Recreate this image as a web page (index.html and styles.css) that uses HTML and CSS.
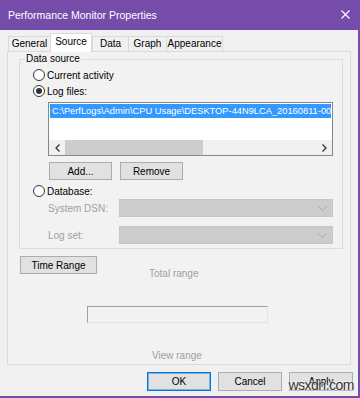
FILE: index.html
```html
<!DOCTYPE html>
<html lang="en">
<head>
    <meta charset="UTF-8">
    <meta name="viewport" content="width=device-width, initial-scale=1.0">
    <title>Performance Monitor Properties</title>
    <link rel="stylesheet" href="styles.css">
</head>
<body>
    <div class="window">
        <div class="titlebar">
            <span>Performance Monitor Properties</span>
            <svg class="close" width="9" height="9" viewBox="0 0 9 9">
                <path d="M0.5 0.5 L8.5 8.5 M8.5 0.5 L0.5 8.5" stroke="#fff" stroke-width="1.1" fill="none"/>
            </svg>
        </div>

        <div class="tabs">
            <div class="tab tab-general">General</div>
            <div class="tab tab-source active">Source</div>
            <div class="tab tab-data">Data</div>
            <div class="tab tab-graph">Graph</div>
            <div class="tab tab-appearance">Appearance</div>
        </div>

        <div class="page">
            <div class="group">
                <span class="legend">Data source</span>

                <div class="radio-row first">
                    <span class="radio"></span>
                    <span>Current activity</span>
                </div>
                <div class="radio-row">
                    <span class="radio checked"></span>
                    <span>Log files:</span>
                </div>

                <div class="listbox">
                    <div class="list-item">C:\PerfLogs\Admin\CPU Usage\DESKTOP-44N9LCA_20160811-000001\DataCollector01.blg</div>
                    <div class="list-fill"></div>
                    <div class="hscroll">
                        <span class="arrow">
                            <svg width="5" height="8" viewBox="0 0 5 8"><path d="M4.5 0.5 L1 4 L4.5 7.5" stroke="#333" stroke-width="1.3" fill="none"/></svg>
                        </span>
                        <span class="thumb"></span>
                        <span class="track"></span>
                        <span class="arrow">
                            <svg width="5" height="8" viewBox="0 0 5 8"><path d="M0.5 0.5 L4 4 L0.5 7.5" stroke="#333" stroke-width="1.3" fill="none"/></svg>
                        </span>
                    </div>
                </div>

                <div class="btn-row">
                    <button class="btn">Add...</button>
                    <button class="btn">Remove</button>
                </div>

                <div class="radio-row db">
                    <span class="radio"></span>
                    <span>Database:</span>
                </div>

                <div class="field dsn">
                    <span class="field-label">System DSN:</span>
                    <span class="combo">
                        <svg width="9" height="5" viewBox="0 0 9 5"><path d="M0.5 0.5 L4.5 4.5 L8.5 0.5" stroke="#a8a8a8" stroke-width="1" fill="none"/></svg>
                    </span>
                </div>
                <div class="field logset">
                    <span class="field-label">Log set:</span>
                    <span class="combo">
                        <svg width="9" height="5" viewBox="0 0 9 5"><path d="M0.5 0.5 L4.5 4.5 L8.5 0.5" stroke="#a8a8a8" stroke-width="1" fill="none"/></svg>
                    </span>
                </div>
            </div>

            <div class="range-head">
                <button class="btn btn-range">Time Range</button>
                <span class="muted total">Total range</span>
            </div>
            <div class="range-box"></div>
            <div class="muted view">View range</div>
        </div>

        <div class="footer">
            <button class="btn btn-foot default">OK</button>
            <button class="btn btn-foot">Cancel</button>
            <button class="btn btn-foot">Apply</button>
        </div>

        <div class="watermark">wsxdn.com</div>
    </div>
</body>
</html>
```

FILE: styles.css
```css
* {
    box-sizing: border-box;
}
body {
    margin: 0;
    font-family: "Liberation Sans", Arial, sans-serif;
    font-size: 10px;
    color: #000;
}
.window {
    position: relative;
    width: 360px;
    height: 398px;
    background: #f0f0f0;
    border-right: 2px solid #764cab;
    border-bottom: 2px solid #764cab;
}
.titlebar {
    height: 30px;
    background: #764cab;
    color: #fff;
    font-size: 10.5px;
    display: flex;
    align-items: center;
    justify-content: space-between;
    padding: 0 8px 1px 8px;
}
.tabs {
    height: 21px;
    display: flex;
    align-items: flex-end;
    padding-left: 8px;
}
.tab {
    height: 15px;
    line-height: 14px;
    text-align: center;
    border: 1px solid #d9d9d9;
    border-bottom: none;
    border-right: none;
    background: #f0f0f0;
}
.tab-general { width: 42px; }
.tab-source { width: 42px; }
.tab-data { width: 36px; }
.tab-graph { width: 38px; }
.tab-appearance {
    width: 57px;
    border-right: 1px solid #d9d9d9;
}
.tab.active {
    position: relative;
    z-index: 1;
    height: 19px;
    margin-bottom: -1px;
    line-height: 16px;
    background: #fff;
    border-right: 1px solid #d9d9d9;
}
.page {
    margin-left: 7px;
    width: 344px;
    height: 314px;
    border: 1px solid #d9d9d9;
    background: #f2f2f2;
}
.group {
    position: relative;
    margin: 7px 0 0 11px;
    width: 324px;
    height: 190px;
    border: 1px solid #dcdcdc;
    padding-top: 8px;
}
.legend {
    position: absolute;
    top: -8px;
    left: 5px;
    padding: 0 1px;
    line-height: 14px;
    background: #f2f2f2;
}
.radio-row {
    display: flex;
    align-items: center;
    gap: 2px;
    height: 14px;
    margin: 2px 0 0 13px;
}
.radio-row.first {
    margin-top: 0;
}
.radio-row.db {
    margin-top: 4px;
}
.radio {
    width: 12px;
    height: 12px;
    border: 1px solid #333;
    border-radius: 50%;
    background: #fff;
    display: flex;
    align-items: center;
    justify-content: center;
}
.radio.checked::after {
    content: "";
    width: 6px;
    height: 6px;
    border-radius: 50%;
    background: #333;
}
.listbox {
    margin: 4px 0 0 28px;
    width: 285px;
    height: 54px;
    border: 1px solid #828790;
    background: #fff;
    display: flex;
    flex-direction: column;
}
.list-item {
    margin: 1px 1px 0 1px;
    height: 14px;
    line-height: 14px;
    padding-left: 2px;
    font-size: 9.3px;
    background: #3399ff;
    color: #fff;
    white-space: nowrap;
    overflow: hidden;
}
.list-fill {
    flex: 1;
}
.hscroll {
    height: 15px;
    display: flex;
    background: #f0f0f0;
}
.arrow {
    width: 16px;
    display: flex;
    align-items: center;
    justify-content: center;
}
.thumb {
    width: 138px;
    background: #cdcdcd;
}
.track {
    flex: 1;
}
.btn-row {
    display: flex;
    gap: 8px;
    margin: 6px 0 0 29px;
}
.btn {
    font: inherit;
    color: #000;
    height: 18px;
    padding: 0;
    border: 1px solid #adadad;
    background: #e1e1e1;
    line-height: 15px;
}
.btn-row .btn {
    width: 63px;
}
.field {
    display: flex;
    align-items: center;
    margin-left: 28px;
}
.field.dsn {
    margin-top: 1px;
}
.field.logset {
    margin-top: 9px;
}
.field-label {
    width: 71px;
    color: #a0a0a0;
}
.combo {
    width: 214px;
    height: 18px;
    background: #cccccc;
    border: 1px solid #c6c6c6;
    display: flex;
    align-items: center;
    justify-content: flex-end;
    padding-right: 5px;
}
.muted {
    color: #a0a0a0;
    line-height: 14px;
}
.range-head {
    display: flex;
    align-items: flex-start;
    margin: 7px 0 0 12px;
}
.btn-range {
    width: 77px;
}
.total {
    margin: 11px 0 0 52px;
}
.range-box {
    margin: 25px 0 0 79px;
    width: 181px;
    height: 17px;
    border: 1px solid #e3e3e3;
    border-top-color: #a0a0a0;
    border-left-color: #a0a0a0;
}
.view {
    margin: 26px 0 0 144px;
}
.footer {
    display: flex;
    justify-content: flex-end;
    gap: 7px;
    margin-top: 7px;
    padding-right: 5px;
}
.btn-foot {
    width: 64px;
    height: 19px;
}
.btn-foot.default {
    border-color: #0078d7;
    box-shadow: inset 0 0 0 1px rgba(0, 120, 215, 0.45);
}
.watermark {
    position: absolute;
    right: 4px;
    bottom: 3px;
    font-size: 14px;
    line-height: 16px;
    color: #333;
    letter-spacing: -0.5px;
    text-shadow: 0 0 2px #fff, 0 0 2px #fff;
}
```
